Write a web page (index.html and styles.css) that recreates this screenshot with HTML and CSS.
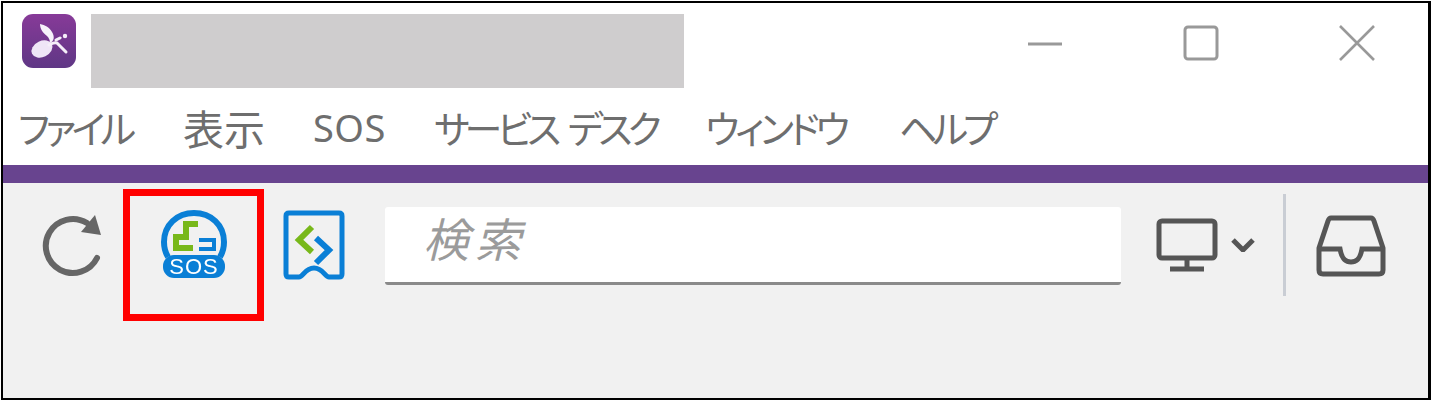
FILE: index.html
```html
<!DOCTYPE html>
<html lang="ja">

<head>
    <meta charset="UTF-8">
    <title>SOS</title>
    <link rel="stylesheet" href="styles.css">
</head>

<body>
    <div class="window">
        <div class="titlebar">
            <svg class="logo" width="54" height="54" viewBox="0 0 54 54">
                <defs>
                    <linearGradient id="logoFill" x1="0" y1="0" x2="0" y2="1">
                        <stop offset="0" stop-color="#873a98" />
                        <stop offset="1" stop-color="#5f3785" />
                    </linearGradient>
                </defs>
                <rect width="54" height="54" rx="11" fill="url(#logoFill)" />
                <ellipse cx="20" cy="35" rx="11" ry="8" transform="rotate(-25 20 35)" fill="#efe6f7" />
                <path d="M28 29C32 27 33 23 30 18C27 13 23 11 18 10C18 15 21 19 25 22C27 24 28 26 28 29Z" fill="#f7f2fa" />
                <path d="M27 31C30 29 32 28 35 29L44 38" fill="none" stroke="#f5eff9" stroke-width="3" stroke-linecap="round" />
                <path d="M34 26L38 24" stroke="#f5eff9" stroke-width="3" stroke-linecap="round" />
                <circle cx="43" cy="22" r="2.2" fill="#f5eff9" />
            </svg>
            <div class="title-mask"></div>
            <div class="win-controls">
                <svg width="36" height="36" viewBox="0 0 36 36">
                    <path d="M1 19H35" stroke="#999" stroke-width="3" />
                </svg>
                <svg width="36" height="36" viewBox="0 0 36 36">
                    <rect x="2" y="2" width="32" height="32" rx="3" fill="none" stroke="#999" stroke-width="3" />
                </svg>
                <svg width="36" height="36" viewBox="0 0 36 36">
                    <path d="M1 1L35 35M35 1L1 35" stroke="#999" stroke-width="2.6" />
                </svg>
            </div>
        </div>

        <div class="menubar">
            <span class="menu-item m-file">ファイル</span>
            <span class="menu-item m-view">表示</span>
            <span class="menu-item m-sos">SOS</span>
            <span class="menu-item m-desk">サービス デスク</span>
            <span class="menu-item m-window">ウィンドウ</span>
            <span class="menu-item m-help">ヘルプ</span>
        </div>

        <div class="accent"></div>

        <div class="toolbar">
            <svg class="tool-icon refresh" width="64" height="66" viewBox="0 0 64 66">
                <path d="M46 10A27 27 0 1 0 56 45" fill="none" stroke="#666" stroke-width="6" stroke-linecap="round" />
                <path d="M54 2L60 22L40 19Z" fill="#666" />
            </svg>
            <svg class="tool-icon sos-icon" width="64" height="68" viewBox="0 0 64 68">
                <path d="M6 47C3 42 2 37 2 32C2 15 15 3 32 3C49 3 62 15 62 32C62 37 61 42 58 47" fill="none" stroke="#0a7fd6" stroke-width="6" />
                <path d="M36 14H24V27H14V38H31" fill="none" stroke="#78b81a" stroke-width="6" />
                <path d="M37 30H52V39H37" fill="none" stroke="#0a7fd6" stroke-width="4" />
                <rect x="1" y="45" width="62" height="23" rx="11" fill="#0a7fd6" />
                <text class="sos-label" x="32" y="64" text-anchor="middle">SOS</text>
            </svg>
            <svg class="tool-icon portal-icon" width="62" height="70" viewBox="0 0 62 70">
                <path d="M6 3H56Q59 3 59 6V64Q59 67 56 67H46C42 67 40 58 31 58C22 58 20 67 16 67H6Q3 67 3 64V6Q3 3 6 3Z" fill="none" stroke="#0a7fd6" stroke-width="5" stroke-linejoin="round" />
                <path d="M29 17L16 30L29 42" fill="none" stroke="#78b81a" stroke-width="6" />
                <path d="M33 28L46 40L33 53" fill="none" stroke="#0a7fd6" stroke-width="6" />
            </svg>
            <div class="search">検索</div>
            <svg class="tool-icon monitor" width="62" height="54" viewBox="0 0 62 54">
                <rect x="3" y="3" width="56" height="37" rx="3" fill="none" stroke="#555" stroke-width="5" />
                <path d="M31 40V50M14 51H48" fill="none" stroke="#555" stroke-width="5" />
            </svg>
            <svg class="tool-icon chevron" width="24" height="14" viewBox="0 0 24 14">
                <path d="M2 2L12 12L22 2" fill="none" stroke="#555" stroke-width="5" />
            </svg>
            <div class="separator"></div>
            <svg class="tool-icon inbox" width="70" height="62" viewBox="0 0 70 62">
                <path d="M15 3H55Q57 3 58 6L67 33V55Q67 59 63 59H7Q3 59 3 55V33L12 6Q13 3 15 3Z" fill="none" stroke="#555" stroke-width="5" stroke-linejoin="round" />
                <path d="M3 34H24C26 45 30 47 35 47C40 47 44 45 46 34H67" fill="none" stroke="#555" stroke-width="5" />
            </svg>
        </div>

        <div class="highlight"></div>
    </div>
</body>

</html>
```

FILE: styles.css
```css
* {
    box-sizing: border-box;
}

body {
    margin: 0;
    background-color: #ffffff;
    font-family: "Noto Sans CJK JP", "Noto Sans", sans-serif;
}

.window {
    position: relative;
    display: flex;
    flex-direction: column;
    width: 1430px;
    height: 399px;
    margin: 1px 0 0 1px;
    border: 2px solid #000000;
    border-width: 2px 3px 2px 2px;
    background-color: #ffffff;
    overflow: hidden;
}

.titlebar {
    display: flex;
    align-items: flex-start;
    height: 95px;
    padding: 11px 0 0 19px;
}

.logo,
.tool-icon {
    filter: blur(0.5px);
}

.title-mask {
    width: 593px;
    height: 74px;
    margin-left: 15px;
    background-color: #cfcdce;
}

.win-controls {
    display: flex;
    gap: 120px;
    margin-left: 343px;
    margin-top: 11px;
    filter: blur(0.4px);
}

.menubar {
    display: flex;
    align-items: center;
    height: 67px;
    padding: 0 0 9px 15px;
    color: #6e6e6e;
    font-size: 38px;
    font-feature-settings: "palt";
    white-space: nowrap;
}

.menu-item {
    line-height: 1;
}

.m-file {
    width: 165px;
    letter-spacing: -4.5px;
}

.m-view {
    width: 130px;
    font-size: 41px;
}

.m-sos {
    width: 121px;
    font-family: "Noto Sans", sans-serif;
    letter-spacing: 0.5px;
}

.m-desk {
    width: 271px;
    letter-spacing: -5px;
    word-spacing: 8px;
}

.m-window {
    width: 194px;
    letter-spacing: -4.2px;
}

.m-help {
    letter-spacing: -5px;
}

.accent {
    height: 18px;
    flex: none;
    background-color: #68448f;
}

.toolbar {
    display: flex;
    align-items: flex-start;
    flex: 1;
    padding-top: 2px;
    background-color: #f1f1f1;
}

.refresh {
    margin: 28px 0 0 38px;
}

.sos-icon {
    margin: 25px 0 0 57px;
    overflow: visible;
}

.sos-label {
    fill: #ffffff;
    font-family: "Liberation Sans", sans-serif;
    font-size: 22px;
    letter-spacing: 1px;
}

.portal-icon {
    margin: 25px 0 0 57px;
}

.search {
    width: 736px;
    height: 78px;
    margin: 22px 0 0 40px;
    padding-left: 38px;
    border-bottom: 3px solid #8a8a8a;
    border-radius: 3px;
    background-color: #ffffff;
    color: #9b9b9b;
    font-size: 46px;
    font-style: italic;
    line-height: 60px;
    letter-spacing: 6px;
}

.monitor {
    margin: 33px 0 0 35px;
}

.chevron {
    margin: 53px 0 0 13px;
}

.separator {
    width: 3px;
    height: 102px;
    margin: 9px 0 0 28px;
    background-color: #c9cdd4;
}

.inbox {
    margin: 30px 0 0 30px;
}

/* red marker drawn over the screenshot */
.highlight {
    position: absolute;
    left: 120px;
    top: 186px;
    width: 141px;
    height: 132px;
    border: 7px solid #ff0000;
}
```
